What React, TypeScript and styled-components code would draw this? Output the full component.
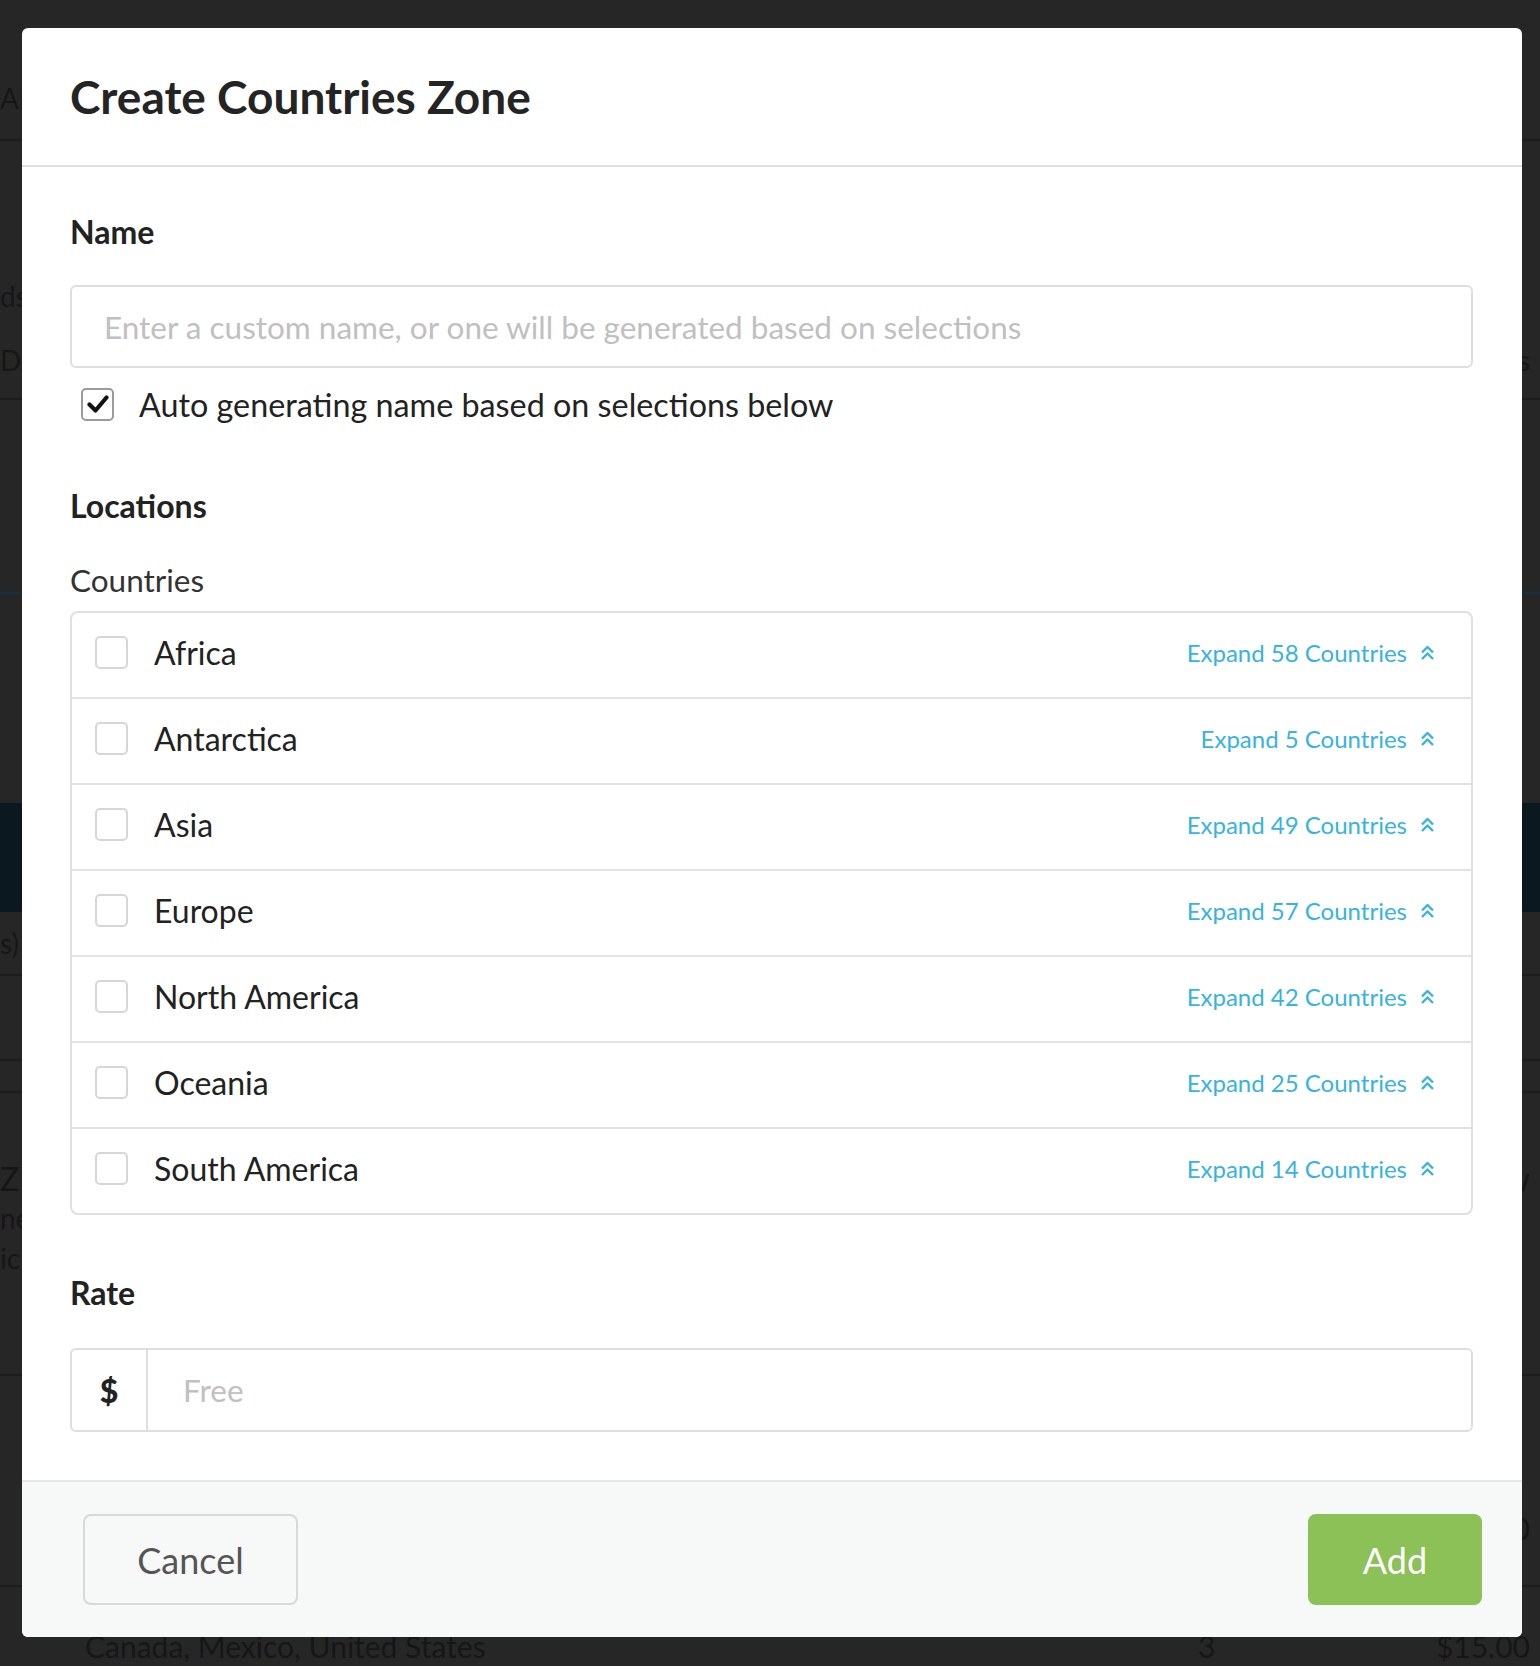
import React from "react";
import styled, { createGlobalStyle } from "styled-components";

const GlobalStyle = createGlobalStyle`
    html, body {
        margin: 0;
        padding: 0;
    }
    body {
        background: #262626;
        font-family: Lato, "Noto Sans", sans-serif;
    }
    * {
        box-sizing: border-box;
    }
`;

const Screen = styled.div`
    position: relative;
    width: 1540px;
    height: 1666px;
    overflow: hidden;
`;

/* dimmed page behind the modal */
const BgPage = styled.div`
    display: flex;
    flex-direction: column;
    color: #161616;
    font-size: 28px;
`;

const BgRow = styled.div<{ $h: number; $line?: string; $bg?: string; $size?: number }>`
    height: ${(p) => p.$h}px;
    display: flex;
    align-items: center;
    justify-content: space-between;
    padding: 0 10px 0 0;
    border-bottom: ${(p) => (p.$line ? `2px solid ${p.$line}` : "none")};
    background: ${(p) => p.$bg || "transparent"};
    font-size: ${(p) => p.$size || 28}px;
`;

const BgCells = styled.div`
    display: flex;
    align-items: center;
`;

const BgCell = styled.span<{ $w?: number; $pl?: number }>`
    display: inline-block;
    width: ${(p) => (p.$w ? `${p.$w}px` : "auto")};
    padding-left: ${(p) => p.$pl || 0}px;
    white-space: nowrap;
`;

/* modal */
const Modal = styled.div`
    position: absolute;
    top: 28px;
    left: 22px;
    width: 1500px;
    background: #fff;
    border-radius: 6px;
    overflow: hidden;
`;

const Header = styled.div`
    height: 139px;
    display: flex;
    align-items: center;
    padding: 0 48px;
    border-bottom: 2px solid #e1e1e1;
`;

const Title = styled.h1`
    margin: 0;
    font-size: 46px;
    font-weight: 700;
    color: #242424;
`;

const Body = styled.div`
    display: flex;
    flex-direction: column;
    padding: 46px 49px 48px 48px;
`;

const Label = styled.div<{ $mt?: number; $bold?: boolean }>`
    margin-top: ${(p) => p.$mt || 0}px;
    font-size: ${(p) => (p.$bold ? 32 : 31.5)}px;
    line-height: 38px;
    font-weight: ${(p) => (p.$bold ? 700 : 400)};
    color: ${(p) => (p.$bold ? "#222" : "#333")};
`;

const TextInput = styled.input`
    margin-top: 34px;
    height: 83px;
    width: 100%;
    border: 2px solid #dedede;
    border-radius: 6px;
    padding: 0 0 0 32px;
    font-family: Lato, sans-serif;
    font-size: 31.5px;
    color: #333;
    outline: none;
    &::placeholder {
        color: #c0c0c0;
    }
`;

const CheckRow = styled.label`
    margin-top: 16px;
    height: 40px;
    display: flex;
    align-items: center;
    gap: 25px;
    padding-left: 11px;
    font-size: 32.3px;
    color: #222;
`;

const Box = styled.span<{ $checked?: boolean }>`
    flex: none;
    width: 33px;
    height: 33px;
    border: 2px solid ${(p) => (p.$checked ? "#9a9a9a" : "#d6d6d6")};
    border-radius: 5px;
    background: #fff;
    display: flex;
    align-items: center;
    justify-content: center;
`;

const List = styled.div`
    margin-top: 12px;
    border: 2px solid #e0e0e0;
    border-radius: 8px;
    display: flex;
    flex-direction: column;
`;

const Region = styled.div`
    height: 86px;
    display: flex;
    align-items: center;
    padding: 0 36px 5px 23px;
    border-bottom: 2px solid #e3e3e3;
    &:last-child {
        border-bottom: none;
        height: 84px;
    }
`;

const RegionName = styled.span`
    margin-left: 26px;
    flex: 1;
    font-size: 32px;
    color: #222;
`;

const Expand = styled.span`
    display: flex;
    align-items: center;
    gap: 13px;
    font-size: 24px;
    color: #37b3e1;
`;

const RateField = styled.div`
    margin-top: 36px;
    height: 84px;
    display: flex;
    border: 2px solid #dedede;
    border-radius: 6px;
    overflow: hidden;
`;

const Addon = styled.span`
    flex: none;
    width: 76px;
    display: flex;
    align-items: center;
    justify-content: center;
    border-right: 2px solid #dedede;
    font-size: 32px;
    font-weight: 900;
    color: #222;
`;

const RateInput = styled.input`
    flex: 1;
    border: none;
    outline: none;
    padding-left: 35px;
    font-family: Lato, sans-serif;
    font-size: 31.5px;
    color: #333;
    &::placeholder {
        color: #c0c0c0;
    }
`;

const Footer = styled.div`
    height: 157px;
    display: flex;
    align-items: center;
    justify-content: space-between;
    padding: 0 40px 0 61px;
    background: #f7f8f8;
    border-top: 2px solid #e6e6e6;
`;

const Button = styled.button<{ $primary?: boolean }>`
    height: 91px;
    width: ${(p) => (p.$primary ? 174 : 215)}px;
    border-radius: 8px;
    border: ${(p) => (p.$primary ? "none" : "2px solid #d9d9d9")};
    background: ${(p) => (p.$primary ? "#8bc157" : "transparent")};
    color: ${(p) => (p.$primary ? "#fff" : "#555")};
    font-family: Lato, sans-serif;
    font-size: 36px;
    cursor: pointer;
`;

const CheckMark = () => (
    <svg width="22" height="20" viewBox="0 0 22 20">
        <path d="M2.5 10.5 L8.5 16.5 L19.5 3.5" fill="none" stroke="#111" strokeWidth="4.2" strokeLinecap="round" strokeLinejoin="round" />
    </svg>
);

const DoubleUp = () => (
    <svg width="15" height="16" viewBox="0 0 15 16">
        <polyline points="2,7.5 7.5,2 13,7.5" fill="none" stroke="#37b3e1" strokeWidth="2.4" strokeLinejoin="round" />
        <polyline points="2,14 7.5,8.5 13,14" fill="none" stroke="#37b3e1" strokeWidth="2.4" strokeLinejoin="round" />
    </svg>
);

const regions = [
    { name: "Africa", count: 58 },
    { name: "Antarctica", count: 5 },
    { name: "Asia", count: 49 },
    { name: "Europe", count: 57 },
    { name: "North America", count: 42 },
    { name: "Oceania", count: 25 },
    { name: "South America", count: 14 },
];

const Background = () => (
    <BgPage>
        <BgRow $h={56} />
        <BgRow $h={85} $line="#1d1d1d">
            <BgCell>AN</BgCell>
        </BgRow>
        <BgRow $h={130} />
        <BgRow $h={50}>
            <BgCell>ds</BgCell>
        </BgRow>
        <BgRow $h={79} $line="#1d1d1d">
            <BgCell>D</BgCell>
            <BgCell>s</BgCell>
        </BgRow>
        <BgRow $h={194} $line="#0f3342" />
        <BgRow $h={209} />
        <BgRow $h={109} $bg="#0c1820" />
        <BgRow $h={64} $line="#1d1d1d">
            <BgCell>s)</BgCell>
        </BgRow>
        <BgRow $h={85} $line="#1d1d1d" />
        <BgRow $h={32} $line="#1d1d1d" />
        <BgRow $h={65} />
        <BgRow $h={40} $size={32}>
            <BgCell>Z</BgCell>
            <BgCell>w</BgCell>
        </BgRow>
        <BgRow $h={40}>
            <BgCell>ne</BgCell>
        </BgRow>
        <BgRow $h={40}>
            <BgCell>ic</BgCell>
        </BgRow>
        <BgRow $h={98} $line="#1d1d1d" />
        <BgRow $h={122} />
        <BgRow $h={60} $size={30}>
            <BgCell />
            <BgCell>$15.00</BgCell>
        </BgRow>
        <BgRow $h={29} $line="#1d1d1d" />
        <BgRow $h={118} $size={30}>
            <BgCells>
                <BgCell $w={1198} $pl={85}>Canada, Mexico, United States</BgCell>
                <BgCell>3</BgCell>
            </BgCells>
            <BgCell>$15.00</BgCell>
        </BgRow>
    </BgPage>
);

const App = (): JSX.Element => {
    return (
        <Screen>
            <GlobalStyle />
            <Background />
            <Modal>
                <Header>
                    <Title>Create Countries Zone</Title>
                </Header>
                <Body>
                    <Label $bold>Name</Label>
                    <TextInput placeholder="Enter a custom name, or one will be generated based on selections" />
                    <CheckRow>
                        <Box $checked>
                            <CheckMark />
                        </Box>
                        Auto generating name based on selections below
                    </CheckRow>

                    <Label $bold $mt={63}>
                        Locations
                    </Label>
                    <Label $mt={36}>Countries</Label>
                    <List>
                        {regions.map((r) => (
                            <Region key={r.name}>
                                <Box />
                                <RegionName>{r.name}</RegionName>
                                <Expand>
                                    Expand {r.count} Countries
                                    <DoubleUp />
                                </Expand>
                            </Region>
                        ))}
                    </List>

                    <Label $bold $mt={59}>
                        Rate
                    </Label>
                    <RateField>
                        <Addon>$</Addon>
                        <RateInput placeholder="Free" />
                    </RateField>
                </Body>
                <Footer>
                    <Button>Cancel</Button>
                    <Button $primary>Add</Button>
                </Footer>
            </Modal>
        </Screen>
    );
};

export default App;
